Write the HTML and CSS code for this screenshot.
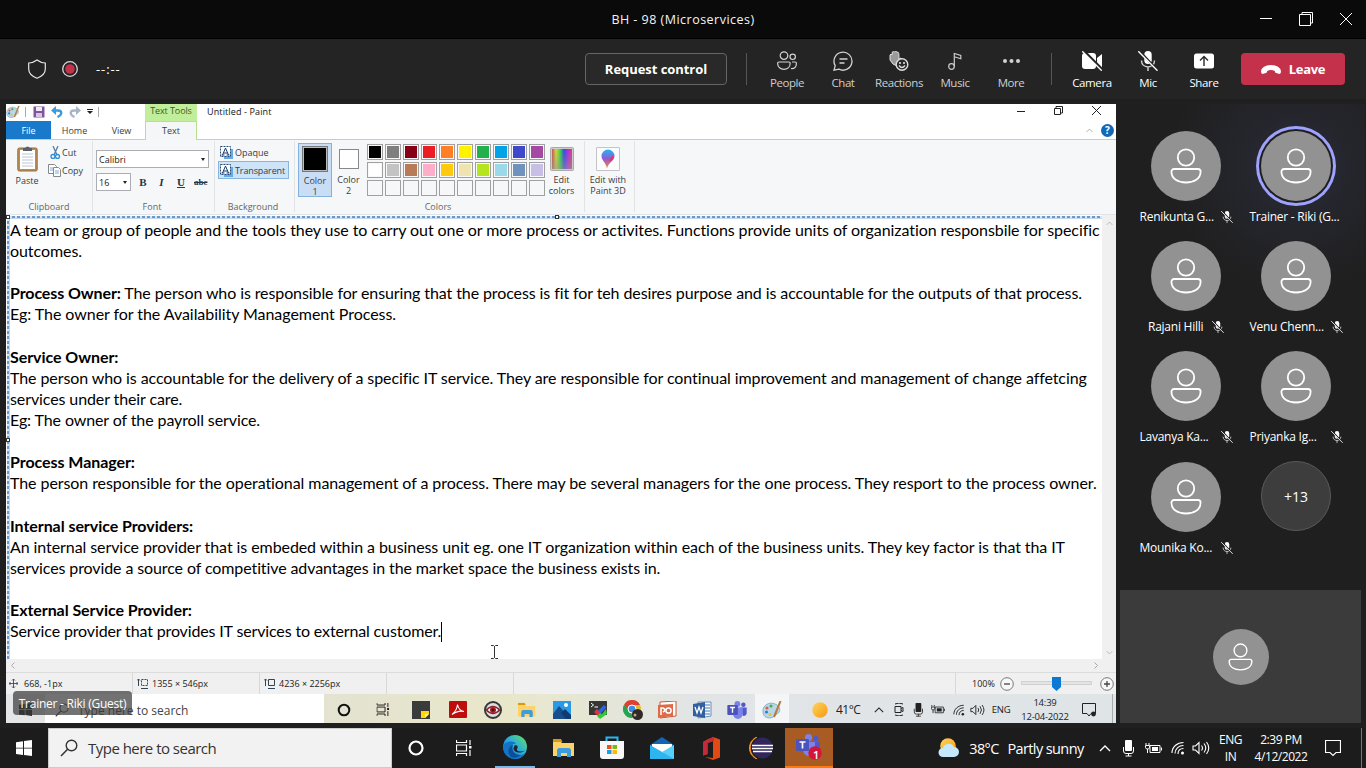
FILE: index.html
```html
<!DOCTYPE html>
<html lang="en">
<head>
<meta charset="utf-8">
<title>BH - 98 (Microservices)</title>
<link rel="stylesheet" href="styles.css">
</head>
<body>
<svg class="defs" width="0" height="0">
  <defs>
    <symbol id="person" viewBox="0 0 32 36"><g fill="none" stroke="#fff" stroke-width="1.8"><circle cx="16" cy="9.5" r="8.2"/><path d="M4 21h24a2.6 2.6 0 0 1 2.6 2.6C30.600 31 24 34.500 16 34.500S1.400 31 1.400 23.600A2.600 2.600 0 0 1 4 21z"/></g></symbol>
    <symbol id="micoff" viewBox="0 0 20 20"><rect x="6.300" y="0" width="7.400" height="13" rx="3.700" fill="#fff"/><path d="M3.500 9.500c0 8.500 13 8.500 13 0M10 16v4" fill="none" stroke="#ccc" stroke-width="1.500"/><path d="M1.300 0l18.500 19.500" stroke="#242424" stroke-width="2.500"/><path d="M.3 .3l19.200 19.400" stroke="#fff" stroke-width="1.400"/></symbol>
    <symbol id="mic" viewBox="0 0 12 17"><rect x="3" y="0" width="7" height="11" rx="1" fill="currentColor"/><path d="M1.500 7v4q0 2.500 2.500 2.500h5q2.500 0 2.500-2.500V7M6.500 13.500V16M3.500 16h6" fill="none" stroke="currentColor"/></symbol>
    <symbol id="battery" viewBox="0 0 17 13"><path d="M5 3.500h10v7H5zM16.500 5.500v3M1 1v2M4 1v2M.5 3.500h4v2l-1 1.500h-2l-1-1.500zM2.500 7v4" fill="none" stroke="currentColor"/><path d="M7 5h6v4H7z" fill="currentColor"/></symbol>
    <symbol id="wifi" viewBox="0 0 14 14"><g fill="none" stroke="currentColor" stroke-width="1.100"><path d="M1 12C1 6 6 1.500 12.500 1.500M4 12.500C4 8 7.500 4.500 12.500 4.500M7 13c0-3.300 2.200-5.500 5.500-5.500"/></g><circle cx="11.500" cy="12" r="1.500" fill="currentColor"/></symbol>
    <symbol id="volume" viewBox="0 0 18 14"><g fill="none" stroke="currentColor" stroke-width="1.100"><path d="M1 5h2.500L7 1.500v11L3.500 9H1zM9.500 4.500q2 2.500 0 5M12 2.500q3.500 4.500 0 9M14.500 1q4.500 6 0 12"/></g></symbol>
    <symbol id="caret" viewBox="0 0 12 7"><path d="M1 6l5-5 5 5" fill="none" stroke="currentColor" stroke-width="1.300"/></symbol>
    <symbol id="win" viewBox="0 0 16 16"><path d="M0 2.200l7-1v6.500H0zM8 1l8-1v7.700H8zM0 8.500h7V15l-7-1zM8 8.500h8V16l-8-1.100z" fill="currentColor"/></symbol>
    <symbol id="lens" viewBox="0 0 18 18"><circle cx="11.500" cy="6.500" r="5.300" fill="none" stroke="currentColor" stroke-width="1.400"/><path d="M7.600 10.300L1 17" stroke="currentColor" stroke-width="1.500"/></symbol>
    <symbol id="taskview" viewBox="0 0 16 16"><path d="M.5 0v2.500h10V0M.5 16v-2.500h10V16M.5 5h10v6H.5zM14 0v5M14 10v6" fill="none" stroke="currentColor" stroke-width="1.200"/><path d="M13 6h2.500v2.500H13z" fill="currentColor"/></symbol>
    <symbol id="folder" viewBox="0 0 22 18"><path d="M0 2h7l2 2h12v13H0z" fill="#fdd368"/><path d="M0 0h8l1.500 3H0z" fill="#d99a12"/><path d="M4 18v-6.500Q4 9 6.500 9h9q2.500 0 2.500 2.500V18h-4v-4H8v4z" fill="#3d9be0"/></symbol>
    <symbol id="teams" viewBox="0 0 24 22"><circle cx="19.800" cy="4.500" r="2.700" fill="#5059c9"/><circle cx="12.500" cy="3.600" r="3.600" fill="#7b83eb"/><path d="M16 8h8v7q-1 4-5 3z" fill="#5059c9"/><path d="M8 8h11v8q-1 6-6 6t-6-6z" fill="#7b83eb"/><rect y="5" width="13" height="12" rx="1" fill="#4b53bc"/><path d="M3.500 8h6M6.500 8v6.500" stroke="#fff" stroke-width="1.700"/></symbol>
    <symbol id="palette" viewBox="0 0 20 18"><path d="M1 11C0 5 7 0 13 3c6 2 6 8 2 10-3 1-3 4-7 4S1 15 1 11z" fill="#b8d8ea" stroke="#6c9db8" stroke-width=".7"/><circle cx="5" cy="7" r="1.600" fill="#e55c45"/><circle cx="9" cy="5" r="1.600" fill="#51a94c"/><circle cx="4.500" cy="11" r="1.600" fill="#397bd0"/><circle cx="8" cy="13.500" r="1.500" fill="#e9c233"/><path d="M18.500 0L12 16" stroke="#ba7b3b" stroke-width="2"/></symbol>
    <symbol id="atext" viewBox="0 0 13 13"><path d="M4 9h9v4H4zM10 3h3v7h-3z" fill="#66abe9"/><path d="M.5.500h10v10H.5z" fill="#fff" stroke="#244b78" stroke-dasharray="2 1"/><path d="M2.500 9l3-7 3 7M3.500 7h4M1.500 9h3M6.500 9h3" fill="none" stroke="#173b68"/></symbol>
    <linearGradient id="g-edge" x1="0" y1="1" x2="1" y2="0"><stop stop-color="#0b57a8"/><stop offset=".5" stop-color="#27a9e5"/><stop offset="1" stop-color="#68e35a"/></linearGradient>
    <linearGradient id="g-hue"><stop stop-color="#c5564c"/><stop offset=".2" stop-color="#dfd33c"/><stop offset=".4" stop-color="#3ddc42"/><stop offset=".6" stop-color="#2b50e4"/><stop offset=".8" stop-color="#b32ae0"/><stop offset="1" stop-color="#d84770"/></linearGradient>
    <linearGradient id="g-shade" x2="0" y2="1"><stop stop-color="#888" stop-opacity="0"/><stop offset="1" stop-color="#999" stop-opacity=".55"/></linearGradient>
    <linearGradient id="g-pin" x2="0" y2="1"><stop stop-color="#22b6f4"/><stop offset=".5" stop-color="#9558d1"/><stop offset="1" stop-color="#ff8a27"/></linearGradient>
    <linearGradient id="g-sun" x2="1" y2="1"><stop stop-color="#ffd45a"/><stop offset="1" stop-color="#f69a12"/></linearGradient>
  </defs>
</svg>

<header class="titlebar">
  <span class="title">BH - 98 (Microservices)</span>
  <div class="winbtns">
    <svg width="12" height="12"><path d="M0 5.500h12" stroke="#fff"/></svg>
    <svg width="14" height="14"><path d="M.5 2.500h11v11H.5zM3 2V.5h10.500V11H12" fill="none" stroke="#fff"/></svg>
    <svg width="12" height="12"><path d="M0 0l12 12M12 0L0 12" stroke="#fff"/></svg>
  </div>
</header>

<div class="toolbar">
  <svg class="shield" width="20" height="20" viewBox="0 0 20 20"><path d="M10 1q3.500 2.700 8.300 3v6q0 6-8.300 9.300Q1.700 16 1.700 10V4Q6.500 3.700 10 1z" fill="none" stroke="#e6e6e6" stroke-width="1.200"/></svg>
  <svg class="rec" width="16" height="16"><circle cx="8" cy="8" r="7.300" fill="none" stroke="#d8d8d8" stroke-width="1.300"/><circle cx="8" cy="8" r="4.800" fill="#c4314b"/></svg>
  <span class="timer">--:--</span>
  <button class="request">Request control</button>
  <i class="vline v1"></i>
  <div class="tool"><svg width="20" height="20"><g fill="none" stroke="#d2d2d2" stroke-width="1.200"><circle cx="7" cy="4.600" r="3.800"/><circle cx="15.700" cy="5.800" r="2.700"/><path d="M1.900 11h10q1.300 0 1.300 1.300c0 8-12.600 8-12.600 0Q.6 11 1.900 11zM15 11h3q1.400 0 1.400 1.300c0 4-2 5.500-5.400 5.200"/></g></svg><span>People</span></div>
  <div class="tool"><svg width="20" height="20"><path d="M1 19.200l1.200-4.500a9 9 0 1 1 3.700 3.500zM6.500 8h8M6.500 12h5" fill="none" stroke="#d2d2d2" stroke-width="1.300"/></svg><span>Chat</span></div>
  <div class="tool"><svg width="20" height="20"><path d="M1 4q1-2 2 0l.3-3Q5-.5 5.500 1 7-.5 8 1.200q1.500-.5 1.800 1.300L10 8l2-1q1 1-.5 3L8 15Q3.500 14 1 9z" fill="#999" stroke="#ddd"/><circle cx="13" cy="13.500" r="5.800" fill="#292929" stroke="#ddd" stroke-width="1.400"/><circle cx="11" cy="12" r=".9" fill="#fff"/><circle cx="15" cy="12" r=".9" fill="#fff"/><path d="M10 14.500q3 4 6 0" fill="none" stroke="#ddd" stroke-width="1.300"/></svg><span>Reactions</span></div>
  <div class="tool"><svg width="20" height="20"><circle cx="6.500" cy="15.500" r="2.800" fill="none" stroke="#ccc" stroke-width="1.200"/><path d="M9.300 15.500V2.500l6.500 2v3.300l-6.500-2" fill="none" stroke="#ccc" stroke-width="1.200"/></svg><span>Music</span></div>
  <div class="tool"><svg width="20" height="20"><g fill="#d2d2d2"><circle cx="4" cy="10" r="2"/><circle cx="10.500" cy="10" r="2"/><circle cx="17" cy="10" r="2"/></g></svg><span>More</span></div>
  <i class="vline v2"></i>
  <div class="tool on"><svg width="20" height="20"><rect x="0" y="2" width="14" height="16" rx="3" fill="#fff"/><path d="M15 7l5-4v14l-5-4z" fill="#fff"/><path d="M2 0l18 18" stroke="#242424" stroke-width="2.500"/><path d="M.3.300l19.400 19.400" stroke="#fff" stroke-width="1.300"/></svg><span>Camera</span></div>
  <div class="tool on"><svg width="20" height="20"><use href="#micoff"/></svg><span>Mic</span></div>
  <div class="tool on"><svg width="20" height="20"><rect y="2.500" width="20" height="15" rx="2.500" fill="#fff"/><path d="M10 15V5.500M6 9.500l4-4 4 4" fill="none" stroke="#292929" stroke-width="1.400"/></svg><span>Share</span></div>
  <button class="leave"><svg width="20" height="9"><path d="M0 6.500Q1 0 10 0t10 6.500q0 3-2.300 2.300l-2.600-.7q-1.200-.3-1.300-2.100Q10 4 6.200 6q-.1 1.800-1.300 2.100l-2.600.7Q0 9.500 0 6.500z" fill="#fff"/></svg>Leave</button>
</div>

<div class="stage">
<main class="share">
  <div class="p-title">
    <div class="quick">
      <svg width="14" height="14" viewBox="0 0 20 18"><use href="#palette"/></svg>
      <i></i>
      <svg width="12" height="12"><path d="M.5.500h11v11H.5z" fill="#81549b"/><path d="M3 1h6v4H3z" fill="#eee9f3"/><path d="M3 7h6v4H3z" fill="#d6c7e2"/></svg>
      <svg width="12" height="12"><path d="M3 4.500h4q4 0 3 3.500-.5 2-3.500 3" fill="none" stroke="#3b9bdd" stroke-width="2.400"/><path d="M0 4.500L5 0v9z" fill="#3b9bdd"/></svg>
      <svg width="12" height="12"><path d="M9 4.500H5Q1 4.500 2 8q.5 2 3.500 3" fill="none" stroke="#a8b5c3" stroke-width="2.400"/><path d="M12 4.500L7 0v9z" fill="#a8b5c3"/></svg>
      <svg width="6" height="6"><path d="M0 .5h6" stroke="#222"/><path d="M0 2h6L3 5z" fill="#222"/></svg>
      <i></i>
    </div>
    <span class="ttools">Text Tools</span>
    <span class="ptitle">Untitled - Paint</span>
    <div class="pbtns">
      <svg width="8" height="10"><path d="M0 5.500h8" stroke="#222"/></svg>
      <svg width="9" height="9"><path d="M.5 2.500h6v6h-6zM2 2V.5h6.500V7H7" fill="none" stroke="#222"/></svg>
      <svg width="9" height="9"><path d="M0 0l9 9M9 0L0 9" stroke="#222"/></svg>
    </div>
  </div>
  <nav class="tabs">
    <span class="file">File</span><span class="tab">Home</span><span class="tab view">View</span><span class="tab active">Text</span>
    <svg class="collapse" width="7" height="5" viewBox="0 0 12 7"><use href="#caret"/></svg><b class="help">?</b>
  </nav>
  <section class="ribbon">
    <div class="group g-clip">
      <div class="gbody">
        <div class="paste"><svg width="21" height="26"><rect x=".8" y="2" width="19.400" height="23" rx="1.500" fill="#b98d55" stroke="#94703f"/><path d="M3 4h15v19H3z" fill="#fff"/><path d="M5 8h11M5 11h11M5 14h11M5 17h11M5 20h11" stroke="#bcc6d2"/><path d="M6 2h2q2.500-3 5 0h2v3H6z" fill="#59616e"/></svg><span>Paste</span></div>
        <div class="cc">
          <div><svg width="14" height="13"><path d="M5 0l4 9M10 0L6 9" stroke="#5a7d9f" stroke-width="1.300"/><circle cx="5" cy="10.500" r="2" fill="none" stroke="#2d8dd4" stroke-width="1.300"/><circle cx="9.500" cy="10.500" r="2" fill="none" stroke="#2d8dd4" stroke-width="1.300"/></svg>Cut</div>
          <div><svg width="14" height="13"><path d="M.5.500h6l2 2v7h-8z" fill="#fff" stroke="#888"/><path d="M5.500 3.500h5l2 2v7h-7z" fill="#fff" stroke="#888"/><path d="M2 4h3M2 6h3M7 7h4M7 9h4" stroke="#7caadc"/></svg>Copy</div>
        </div>
      </div>
      <span class="glabel">Clipboard</span>
    </div>
    <div class="group g-font">
      <div class="gbody">
        <div class="sel">Calibri<i class="dd"></i></div>
        <div class="frow"><div class="sel size">16<i class="dd"></i></div><b>B</b><em>I</em><u>U</u><s>abc</s></div>
      </div>
      <span class="glabel">Font</span>
    </div>
    <div class="group g-back">
      <div class="gbody">
        <div class="opt"><svg width="13" height="13"><use href="#atext"/></svg>Opaque</div>
        <div class="opt sel-on"><svg width="13" height="13"><use href="#atext"/></svg>Transparent</div>
      </div>
      <span class="glabel">Background</span>
    </div>
    <div class="group g-col">
      <div class="gbody">
        <div class="cbtn c1"><i class="sw"></i><span>Color<br>1</span></div>
        <div class="cbtn c2"><i class="sw"></i><span>Color<br>2</span></div>
        <div class="pal">
          <i class="k0"></i><i class="k1"></i><i class="k2"></i><i class="k3"></i><i class="k4"></i><i class="k5"></i><i class="k6"></i><i class="k7"></i><i class="k8"></i><i class="k9"></i>
          <i class="m0"></i><i class="m1"></i><i class="m2"></i><i class="m3"></i><i class="m4"></i><i class="m5"></i><i class="m6"></i><i class="m7"></i><i class="m8"></i><i class="m9"></i>
          <i></i><i></i><i></i><i></i><i></i><i></i><i></i><i></i><i></i><i></i>
        </div>
        <div class="cbtn ec"><svg width="24" height="24"><rect x=".5" y=".5" width="23" height="23" rx="1" fill="#ccc" stroke="#aaa"/><path d="M2 2h20v20H2z" fill="url(#g-hue)"/><path d="M2 2h20v20H2z" fill="url(#g-shade)"/></svg><span>Edit<br>colors</span></div>
      </div>
      <span class="glabel">Colors</span>
    </div>
    <div class="group g-3d">
      <div class="gbody"><div class="cbtn"><svg width="24" height="24"><path d="M.5.500h23v23H.5z" fill="#fbfcfe" stroke="#c4c4c8"/><path d="M12 2.500a6.500 6.500 0 0 1 6.500 6.500c0 5-6 6-7.500 12.500-1-6-5.500-8-5.500-12.500A6.500 6.500 0 0 1 12 2.500z" fill="url(#g-pin)"/><path d="M13 14l4-6q1 4-2 6z" fill="#e2365c"/></svg><span>Edit with<br>Paint 3D</span></div></div>
    </div>
  </section>

  <div class="work">
    <div class="paper">
      <div class="ln l1">A team or group of people and the tools they use to carry out one or more process or activites. Functions provide units of organization responsbile for specific</div>
      <div class="ln">outcomes.</div>
      <div class="ln"></div>
      <div class="ln l4"><b>Process Owner:</b> The person who is responsible for ensuring that the process is fit for teh desires purpose and is accountable for the outputs of that process.</div>
      <div class="ln l5">Eg: The owner for the Availability Management Process.</div>
      <div class="ln"></div>
      <div class="ln"><b>Service Owner:</b></div>
      <div class="ln l8">The person who is accountable for the delivery of a specific IT service. They are responsible for continual improvement and management of change affetcing</div>
      <div class="ln l9">services under their care.</div>
      <div class="ln l9">Eg: The owner of the payroll service.</div>
      <div class="ln"></div>
      <div class="ln"><b>Process Manager:</b></div>
      <div class="ln l13">The person responsible for the operational management of a process. There may be several managers for the one process. They resport to the process owner.</div>
      <div class="ln"></div>
      <div class="ln"><b>Internal service Providers:</b></div>
      <div class="ln l16">An internal service provider that is embeded within a business unit eg. one IT organization within each of the business units. They key factor is that tha IT</div>
      <div class="ln l17">services provide a source of competitive advantages in the market space the business exists in.</div>
      <div class="ln"></div>
      <div class="ln"><b>External Service Provider:</b></div>
      <div class="ln l20">Service provider that provides IT services to external customer.<i class="textcaret"></i></div>
      <i class="dash top"></i><i class="dash left"></i>
      <i class="handle h1"></i><i class="handle h2"></i><i class="handle h3"></i>
      <svg class="ibeam" width="7" height="14"><path d="M0 .5h2.500l1 1 1-1H7M3.500 1v12M0 13.500h2.500l1-1 1 1H7" fill="none" stroke="#333"/></svg>
    </div>
    <div class="vscroll"><svg width="7" height="5" viewBox="0 0 12 7"><use href="#caret"/></svg><svg class="down" width="7" height="5" viewBox="0 0 12 7"><use href="#caret"/></svg></div>
  </div>
  <div class="hscroll"><svg width="5" height="7"><path d="M4.500.500l-3 3 3 3" fill="none" stroke="#aaa"/></svg><svg width="5" height="7"><path d="M.5.500l3 3-3 3" fill="none" stroke="#aaa"/></svg></div>
  <div class="status">
    <div class="pos"><svg width="9" height="9"><path d="M4.500 0v9M0 4.500h9M3 1.500L4.500 0 6 1.500M3 7.500L4.500 9 6 7.500M1.500 3L0 4.500 1.500 6M7.500 3L9 4.500 7.500 6" fill="none" stroke="#3c4a5c" stroke-width=".9"/></svg>668, -1px</div>
    <div><svg width="12" height="10"><path d="M1.500 0v7M0 1.500L1.500 0 3 1.500M4 9.500h7" stroke="#345" fill="none"/><path d="M4.500.500h6v6h-6z" fill="none" stroke="#345" stroke-dasharray="2 1"/></svg>1355 × 546px</div>
    <div><svg width="12" height="10"><path d="M1.500 0v7M0 1.500L1.500 0 3 1.500M4 9.500h7M4.500.500h6v6h-6z" stroke="#345" fill="none"/></svg>4236 × 2256px</div>
    <div></div><div></div>
    <div class="zoombar">100%<svg class="minus" width="14" height="14"><circle cx="7" cy="7" r="6.300" fill="#f8f8f8" stroke="#777"/><path d="M4 7h6" stroke="#444" stroke-width="1.300"/></svg><svg width="71" height="16"><path d="M.5 5.500h70v3H.5z" fill="#e4e4e4" stroke="#d0d0d0"/><path d="M31 1h9v10l-4.500 4L31 11z" fill="#0b78d4"/></svg><svg class="plus" width="14" height="14"><circle cx="7" cy="7" r="6.300" fill="#f8f8f8" stroke="#777"/><path d="M4 7h6M7 4v6" stroke="#444" stroke-width="1.300"/></svg></div>
  </div>
  <div class="itask">
    <span><svg width="13" height="13" viewBox="0 0 16 16"><use href="#win"/></svg></span>
    <div class="isearch"><svg width="14" height="14" viewBox="0 0 18 18"><use href="#lens"/></svg>Type here to search</div>
    <span><svg width="14" height="14"><circle cx="7" cy="7" r="5.300" fill="none" stroke="#111" stroke-width="2"/></svg></span>
    <span><svg width="14" height="13" viewBox="0 0 16 16"><use href="#taskview"/></svg></span>
    <span><svg width="18" height="18"><path d="M0 0h18v18H0z" fill="#3b3b3b"/><path d="M9 10h8v3l-4 4H9z" fill="#ffd900"/><path d="M13 17v-4h4z" fill="#fff2a0"/></svg></span>
    <span><svg width="18" height="17"><rect width="18" height="17" rx="1" fill="#bd0d0d"/><path d="M3 13.500Q8 9.500 8.500 3.500q1 6 6.500 7-5-1.500-12 3z" fill="none" stroke="#fff" stroke-width="1.100"/></svg></span>
    <span><svg width="18" height="18"><circle cx="9" cy="9" r="8" fill="#ddd" stroke="#34383b" stroke-width="2"/><path d="M2.500 9q6.500-7 13 0-6.500 7-13 0z" fill="#fff" stroke="#8c2529" stroke-width="1.500"/><circle cx="9" cy="9" r="3" fill="#a31b24"/><circle cx="9" cy="9" r="1.200" fill="#222"/></svg></span>
    <span><svg width="18" height="16" viewBox="0 0 22 18"><use href="#folder"/></svg></span>
    <span><svg width="18" height="18"><path d="M0 0h18v18H0z" fill="#2b9ae6"/><path d="M0 13l6-8 12 13H0z" fill="#174e8b"/><path d="M8 12l4-4 6 6v4h-5z" fill="#103b70"/><circle cx="13" cy="4" r="2" fill="#fff"/></svg></span>
    <span><svg width="18" height="18"><path d="M0 0h18v14H0z" fill="#363636"/><path d="M2 2l2.500 2L2 6M5.500 6H9" fill="none" stroke="#fff"/><path d="M5 11l3-3 4 4-3 3z" fill="#ed2f36"/><path d="M9 10l6-6 2.500 2.500-6 6z" fill="#2864ee"/><path d="M8 15l3-3 2 1 4-5 1 5-7 5z" fill="#32ca35"/></svg></span>
    <span><svg width="20" height="20"><circle cx="9" cy="9" r="9" fill="#ddbd30"/><path d="M1.200 4.500A9 9 0 0 1 17 5H9a4.200 4.200 0 0 0-3.500 6.500z" fill="#dd4035"/><path d="M1.200 4.500A9 9 0 0 0 9 18l3.300-6A4 4 0 0 1 5.500 11z" fill="#28a352"/><circle cx="9" cy="9" r="4" fill="#3d8de4" stroke="#fff"/><circle cx="14.500" cy="14.500" r="5.500" fill="#302a26"/><circle cx="12" cy="15" r="1.500" fill="#bca58e"/></svg></span>
    <span><svg width="19" height="18"><path d="M2 1l16-1v15L2 17z" fill="#fff" stroke="#d05431"/><path d="M0 4l15-1v12L0 17z" fill="#de6b45"/><circle cx="10.500" cy="9.500" r="2.600" fill="none" stroke="#fff" stroke-width="1.500"/><path d="M3 14V7h2q4 2 0 4" fill="none" stroke="#fff" stroke-width="1.500"/></svg></span>
    <span><svg width="19" height="18"><path d="M5 1h13v14L5 17z" fill="#f5f8fb" stroke="#6d8fb8"/><path d="M12 4h5M12 7h5M12 10h5M12 13h5" stroke="#4b78b3"/><path d="M0 3l12-2v16L0 15z" fill="#315f9f"/><path d="M2 6l2 6 2-6 2 6 2-6" fill="none" stroke="#fff" stroke-width="1.300"/></svg></span>
    <span><svg width="20" height="18" viewBox="0 0 24 22"><use href="#teams"/></svg></span>
    <span class="cur"><svg width="20" height="18"><use href="#palette"/></svg></span>
    <span class="sun"><svg width="16" height="16"><circle cx="8" cy="8" r="7.700" fill="url(#g-sun)"/></svg></span>
    <span class="deg">41°C</span>
    <span><svg width="10" height="6" viewBox="0 0 12 7"><use href="#caret"/></svg></span>
    <span><svg width="10" height="13"><path d="M1 1q4-2 8 0M1 12q4 2 8 0M1 3.500h6v6H1zM7 5.500l2-1v4l-2-1" fill="none" stroke="#222"/></svg></span>
    <span><svg width="10" height="14" viewBox="0 0 12 17"><use href="#mic"/></svg></span>
    <span><svg width="14" height="11" viewBox="0 0 17 13"><use href="#battery"/></svg></span>
    <span><svg width="12" height="12" viewBox="0 0 14 14"><use href="#wifi"/></svg></span>
    <span><svg width="15" height="12" viewBox="0 0 18 14"><use href="#volume"/></svg></span>
    <span class="tx">ENG</span>
    <span class="tx clock">14:39<br>12-04-2022</span>
    <span class="noti"><svg width="14" height="14"><path d="M.5.500h13v10H9l-2 2.500-2-2.500H.5z" fill="none" stroke="#222"/><circle cx="11.500" cy="11" r="2.400" fill="#222"/></svg></span>
    <span class="edge"></span>
  </div>
  <span class="presenter">Trainer - Riki (Guest)</span>
</main>

<aside class="side">
  <div class="people">
    <div class="p"><i class="av"><svg width="32" height="36"><use href="#person"/></svg></i><span>Renikunta G...<svg width="12" height="12"><use href="#micoff"/></svg></span></div>
    <div class="p talk"><i class="av"><svg width="32" height="36"><use href="#person"/></svg></i><span>Trainer - Riki (G...</span></div>
    <div class="p short"><i class="av"><svg width="32" height="36"><use href="#person"/></svg></i><span>Rajani Hilli<svg width="12" height="12"><use href="#micoff"/></svg></span></div>
    <div class="p"><i class="av"><svg width="32" height="36"><use href="#person"/></svg></i><span>Venu Chenn...<svg width="12" height="12"><use href="#micoff"/></svg></span></div>
    <div class="p"><i class="av"><svg width="32" height="36"><use href="#person"/></svg></i><span>Lavanya Ka...<svg width="12" height="12"><use href="#micoff"/></svg></span></div>
    <div class="p"><i class="av"><svg width="32" height="36"><use href="#person"/></svg></i><span>Priyanka Ig...<svg width="12" height="12"><use href="#micoff"/></svg></span></div>
    <div class="p last"><i class="av"><svg width="32" height="36"><use href="#person"/></svg></i><span>Mounika Ko...<svg width="12" height="12"><use href="#micoff"/></svg></span></div>
    <div class="p"><i class="av more">+13</i></div>
  </div>
  <div class="self"><i class="av small"><svg width="25" height="28" viewBox="0 0 32 36"><use href="#person"/></svg></i></div>
</aside>
</div>

<footer class="task">
  <span class="start"><svg width="16" height="16"><use href="#win"/></svg></span>
  <div class="search"><svg width="18" height="18"><use href="#lens"/></svg>Type here to search</div>
  <span><svg width="16" height="16"><circle cx="8" cy="8" r="6.500" fill="none" stroke="#fff" stroke-width="2.200"/></svg></span>
  <span><svg width="16" height="16"><use href="#taskview"/></svg></span>
  <span class="under"><svg width="24" height="24" viewBox="0 0 24 24"><circle cx="12" cy="12" r="12" fill="url(#g-edge)"/><path d="M0 12C1 6 11 5 13 9c-4-1-6 3-4 7 2 5 8 6 13 2q-4 6-10 6Q1 23 0 12z" fill="#1474c4"/><path d="M8 22C4 18 5 11 10 10c-2 5 1 10 8 10q-5 4-10 2z" fill="#0a4e98"/><path d="M11.500 10.500c3-1 4 1.500 2.500 3.500-1 2 3 3.500 8 1.500-3 3-11 3-11.500-2z" fill="#1c2733"/></svg></span>
  <span><svg width="22" height="18"><use href="#folder"/></svg></span>
  <span><svg width="24" height="24"><path d="M6.500 6V1.500h11V6" fill="none" stroke="#28b7f3" stroke-width="2"/><path d="M0 5h24v15q0 3-3 3H3q-3 0-3-3z" fill="#f8f8f8"/><path d="M7 9h4.500v4H7z" fill="#f05020"/><path d="M12.500 9H17v4h-4.500z" fill="#7aba17"/><path d="M7 14h4.500v4H7z" fill="#16a2e7"/><path d="M12.500 14H17v4h-4.500z" fill="#fdb813"/></svg></span>
  <span><svg width="24" height="22"><path d="M0 8l12-8 12 8v14H0z" fill="#1264b4"/><path d="M2 7h20v6l-10 5L2 13z" fill="#fff"/><path d="M0 8l14 8 10-8v14H0z" fill="#2eb4ef"/><path d="M24 8v14L12 15z" fill="#57cff6"/></svg></span>
  <span><svg width="19" height="23"><path d="M11 0l7 2.500v18L11 23l-8-3 8 1V4L5.500 6v11L1 18.500V5z" fill="#e14a14"/><path d="M1 5l5-3 6-2v4L5.500 6v11L1 18.500z" fill="#c62a39"/></svg></span>
  <span><svg width="24" height="22"><path d="M8 0C-2 4-2 18 8 22-1 17-1 5 8 0z" fill="#f7941e" stroke="#f7941e"/><circle cx="13.500" cy="11" r="10.500" fill="#32265c"/><path d="M3 8.500h21M3 11.500h21M4 14.500h19" stroke="#fff" stroke-width="1.600"/></svg></span>
  <span class="teamsapp"><svg width="26" height="26" viewBox="0 0 26 26"><svg width="24" height="22"><use href="#teams"/></svg><circle cx="19" cy="19" r="6.700" fill="#d3153b"/></svg><b>1</b></span>
  <span></span>
  <span><svg width="21" height="20"><circle cx="10" cy="8" r="7.800" fill="url(#g-sun)"/><path d="M5 19a4.500 4.500 0 0 1 0-9 6 6 0 0 1 11-1 5 5 0 0 1 0 10z" fill="#c5e8fc"/></svg></span>
  <span class="w">38°C</span>
  <span class="w">Partly sunny</span>
  <span><svg width="12" height="7"><use href="#caret"/></svg></span>
  <span><svg width="12" height="17"><use href="#mic"/></svg></span>
  <span><svg width="17" height="13"><use href="#battery"/></svg></span>
  <span><svg width="14" height="14"><use href="#wifi"/></svg></span>
  <span><svg width="18" height="14"><use href="#volume"/></svg></span>
  <span class="tt">ENG<br>IN</span>
  <span class="tt">2:39 PM<br>4/12/2022</span>
  <span class="noti2"><svg width="16" height="17"><path d="M.5.500h15v12H11l-3 3-3-3H.5z" fill="none" stroke="#fff" stroke-width="1.200"/></svg></span>
  <span class="edge2"></span>
</footer>
</body>
</html>
```
FILE: styles.css
```css
* { box-sizing: border-box; }
html, body { margin: 0; width: 1366px; height: 768px; overflow: hidden; }
body { background: #1f1f1f; color: #fff; font-family: "Open Sans", "Noto Sans", sans-serif; font-size: 12px; display: flex; flex-direction: column; }
svg { display: block; flex: none; }
.defs { position: absolute; }
i { font-style: normal; }
button { font-family: inherit; padding: 0; margin: 0; color: #fff; }

.titlebar { height: 39px; flex: none; background: #0a0a0a; border-bottom: 1px solid #000; position: relative; display: flex; align-items: center; justify-content: center; }
.title { font-size: 12.500px; letter-spacing: .48px; color: #f4f4f4; }
.winbtns { position: absolute; right: 14px; top: 12px; display: flex; align-items: center; gap: 27px; }

.toolbar { height: 60px; flex: none; background: #242424; display: flex; align-items: center; padding: 0 21px 0 27px; }
.rec { margin-left: 15px; }
.timer { margin-left: 18px; width: 26px; font-size: 13px; letter-spacing: .9px; }
.request { margin-left: 463px; width: 142px; height: 32px; border: 1px solid #666; border-radius: 4px; background: #292929; font-size: 13px; font-weight: 700; letter-spacing: -.05px; flex: none; }
.vline { width: 1px; height: 32px; background: #555; }
.v1 { margin: 0 12px 0 19px; }
.v2 { margin: 0 12px; }
.tool { width: 56px; flex: none; display: flex; flex-direction: column; align-items: center; gap: 4px; padding-top: 4px; color: #cfcfcf; font-size: 11.500px; line-height: 16px; letter-spacing: -.45px; }
.tool.on { color: #fff; letter-spacing: -.35px; }
.leave { margin-left: auto; width: 104px; height: 32px; border: 0; border-radius: 4px; background: #c4314b; font-size: 13px; font-weight: 700; letter-spacing: -.3px; display: flex; align-items: center; justify-content: center; gap: 8px; }

.stage { height: 629px; flex: none; display: flex; padding: 5px 0 5px 6px; }
.share { width: 1110px; height: 619px; background: #fff; color: #3c3c3c; position: relative; display: flex; flex-direction: column; font-size: 9px; }

.p-title { height: 17px; display: flex; align-items: stretch; }
.quick { width: 139px; display: flex; align-items: center; gap: 6px; padding: 0 0 2px; }
.quick i { width: 1px; height: 10px; background: #aaa; margin: 0 1px 0 -1px; }
.ttools { width: 52px; background: #c0ee9a; color: #3c5c2c; line-height: 13px; text-align: center; letter-spacing: -.1px; }
.ptitle { margin-left: 10px; line-height: 16px; color: #111; letter-spacing: .12px; }
.pbtns { margin-left: auto; display: flex; align-items: center; gap: 29px; padding: 0 15px 4px 0; }
.tabs { height: 19px; border-bottom: 1px solid #b6e08e; display: flex; line-height: 19px; text-align: center; }
.file { width: 45px; background: #1979ca; color: #fff; }
.tab { width: 47px; }
.tab.view { width: 47px; }
.tab.active { width: 52px; height: 19px; background: #f5f6f7; border: 1px solid #b6e08e; border-bottom: 0; line-height: 17px; }
.collapse { margin: 7px 8px 0 auto; color: #999; }
.help { width: 13px; height: 13px; margin: 3px 2px 0 0; border-radius: 50%; background: #1267b8; color: #fff; font-size: 10px; line-height: 13px; }

.ribbon { height: 75px; background: #f5f7f9; border-bottom: 1px solid #e0e3e8; display: flex; }
.group { display: flex; flex-direction: column; border-right: 1px solid #e2e3e5; margin: 1px 0 2px; }
.gbody { height: 58px; flex: none; display: flex; }
.glabel { text-align: center; line-height: 14px; padding-top: 1px; color: #666; }
.g-clip { width: 87px; }
.g-font { width: 122px; }
.g-font .gbody, .g-back .gbody { flex-direction: column; }
.g-back { width: 80px; }
.g-back .glabel, .g-font .glabel, .g-col .glabel { padding-right: 3px; }
.g-col { width: 290px; }
.g-3d { width: 50px; }
.paste { width: 42px; padding-top: 5px; display: flex; flex-direction: column; align-items: center; gap: 2px; line-height: 13px; }
.cc { padding-top: 3px; display: flex; flex-direction: column; gap: 1px; }
.cc div { display: flex; gap: 0; align-items: center; height: 17px; }
.sel { width: 113px; height: 18px; margin: 9px 0 0 3px; border: 1px solid #abadb3; background: #fff; display: flex; justify-content: space-between; align-items: center; padding: 0 3px 0 2px; color: #222; flex: none; }
.size { width: 35px; margin: 0 0 0 3px; }
.dd { border: 2.500px solid transparent; border-top: 3px solid #222; border-bottom: 0; }
.frow { display: flex; align-items: center; margin-top: 5px; color: #26364c; font-family: "Liberation Serif", serif; font-size: 11px; }
.frow .size { font-family: "Open Sans", sans-serif; font-size: 9px; }
.frow b { width: 24px; text-align: center; }
.frow em { width: 13px; text-align: center; font-weight: 700; }
.frow u { width: 26px; text-align: center; font-weight: 700; }
.frow s { font-size: 9px; font-weight: 700; }
.opt { height: 18px; margin: 2px 0 0 3px; width: 71px; border: 1px solid transparent; display: flex; align-items: center; gap: 2px; padding-left: 1px; flex: none; }
.opt + .opt { margin-top: 0; }
.sel-on { background: #cde3f8; border-color: #88b5df; letter-spacing: -.12px; }
.cbtn { display: flex; flex-direction: column; align-items: center; text-align: center; line-height: 10.500px; padding-top: 6px; }
.cbtn span { margin-top: 4px; white-space: nowrap; }
.c1 { width: 34px; height: 54px; margin: 2px 0 0 3px; background: #c9def5; border: 1px solid #84b2de; padding-top: 2px; }
.c1 .sw { width: 26px; height: 26px; border: 1px solid #777; outline: 1px solid #bbb; outline-offset: -2px; background: #000; flex: none; }
.c1 span { margin-top: 4px; }
.c2 { width: 35px; padding: 8px 2px 0 0; }
.c2 .sw { width: 20px; height: 20px; border: 1px solid #888; background: #fff; flex: none; }
.c2 span { margin-top: 6px; }
.pal { display: grid; grid-template-columns: repeat(10, 16px); grid-auto-rows: 16px; gap: 2px; height: 52px; margin-top: 3px; }
.pal i { border: 1px solid #a0a0a0; box-shadow: inset 0 0 0 1px #f8f8f8; }
.k0 { background: #000; } .k1 { background: #7f7f7f; } .k2 { background: #880015; } .k3 { background: #ed1c24; } .k4 { background: #ff7f27; }
.k5 { background: #fff200; } .k6 { background: #22b14c; } .k7 { background: #00a2e8; } .k8 { background: #3f48cc; } .k9 { background: #a349a4; }
.m0 { background: #fff; } .m1 { background: #c3c3c3; } .m2 { background: #b97a57; } .m3 { background: #ffaec9; } .m4 { background: #ffc90e; }
.m5 { background: #efe4b0; } .m6 { background: #b5e61d; } .m7 { background: #99d9ea; } .m8 { background: #7092be; } .m9 { background: #c8bfe7; }
.ec { width: 33px; }
.g-3d .cbtn { width: 46px; }

.work { height: 444px; display: flex; }
.paper { width: 1096px; padding: 4px 0 0 4px; position: relative; color: #000; font-family: Lato, "Open Sans", sans-serif; font-size: 16px; overflow: hidden; }
.ln { height: 21.120px; line-height: 21.120px; white-space: nowrap; letter-spacing: -.06px; }
.l1 { letter-spacing: -.075px; }
.l4 { letter-spacing: -.1px; }
.l5 { letter-spacing: -.05px; }
.l8 { letter-spacing: -.085px; }
.l9, .l17 { letter-spacing: -.105px; }
.l13 { letter-spacing: -.075px; }
.l16 { letter-spacing: -.08px; }
.l20 { letter-spacing: -.14px; }
.textcaret { display: inline-block; width: 1px; height: 20px; background: #000; vertical-align: -5px; }
.dash { position: absolute; }
.dash.top { left: 1px; top: 1px; width: 1095px; height: 3px; background: repeating-linear-gradient(90deg, #6b9bcd 0 3px, #d9e7f5 3px 5px); border-bottom: 1px solid #c3d5ea; }
.dash.left { left: 1px; top: 1px; width: 3px; height: 443px; background: repeating-linear-gradient(0deg, #6b9bcd 0 3px, #d9e7f5 3px 5px); border-right: 1px solid #c3d5ea; }
.handle { position: absolute; width: 4px; height: 4px; border: 1px solid #333; background: #fff; }
.h1 { left: 0; top: 0; } .h2 { left: 549px; top: 0; } .h3 { left: 0; top: 223px; }
.ibeam { position: absolute; left: 485px; top: 430px; }
.vscroll { width: 14px; background: #f0f0f0; color: #aaa; display: flex; flex-direction: column; justify-content: space-between; align-items: center; padding: 6px 0 4px; }
.down { transform: rotate(180deg); }
.hscroll { height: 13px; background: #f0f0f0; display: flex; justify-content: space-between; align-items: center; padding: 0 17px 0 4px; }
.status { height: 22px; border-top: 1px solid #dcdcdc; background: #f0f0f0; display: grid; grid-template-columns: 127px 127px 127px 127px 442px 160px; color: #222; }
.status > div { border-right: 1px solid #d8d8d8; display: flex; align-items: center; gap: 3px; padding-left: 4px; }
.status > .pos { padding-left: 3px; gap: 6px; }
.status .zoombar { border: 0; padding-left: 16px; gap: 0; }
.minus { margin: 0 7px 0 5px; }
.plus { margin-left: 8px; }

.itask { height: 29px; display: grid; align-items: center; color: #222; background: linear-gradient(90deg, #e4e6e8 0, #e4e3d0 32%, #e9e7ca 45%, #e2e5e6 62%, #dfe4e6 100%);
  grid-template-columns: 39px 279px 40px 38px 38px 35px 35px 34px 36px 36px 34px 35px 34px 36px 34px 47px 34px 18px 22px 16px 24px 18px 18px 30px 58px 30px 12px; grid-auto-rows: 29px; }
.itask > span, .task > span { display: flex; align-items: center; justify-content: center; height: 100%; }
.itask > span { padding-top: 2px; }
.itask > .cur { background: #f3f5f6; }
.isearch { height: 29px; background: #fff; display: flex; align-items: center; gap: 9px; padding: 3px 0 0 10px; font-size: 12px; letter-spacing: 0; color: #444; }
.itask > .sun { justify-content: flex-end; padding-right: 8px; }
.itask .deg { font-size: 12px; letter-spacing: -.5px; justify-content: flex-start; }
.itask .tx { font-size: 9.500px; letter-spacing: -.2px; line-height: 14px; text-align: center; }
.itask > .edge { border-left: 1px solid #aaa; margin-left: 8px; }
.presenter { position: absolute; left: 7px; top: 587px; width: 119px; height: 24px; border-radius: 4px; background: rgba(60,60,60,.72); color: #fff; font-size: 12px; letter-spacing: -.25px; line-height: 25px; text-align: center; white-space: nowrap; }

.side { width: 245px; margin-left: 4px; display: flex; flex-direction: column; justify-content: space-between; align-items: flex-start; height: 619px; background: radial-gradient(circle 130px at 176px 62px, #292a36, rgba(31,31,31,0)); }
.people { display: grid; grid-template-columns: 110px 110px; grid-auto-rows: 110px; padding: 27px 0 0 11px; }
.p { display: flex; flex-direction: column; align-items: center; }
.p.last { padding-top: 1px; }
.p span { width: 93px; display: flex; justify-content: space-between; align-items: center; margin-top: 8px; line-height: 16px; font-size: 12px; letter-spacing: -.25px; white-space: nowrap; }
.p.short span { width: 76px; }
.av { width: 70px; height: 70px; flex: none; border-radius: 50%; background: #929292; display: flex; align-items: center; justify-content: center; }
.talk .av { box-shadow: 0 0 0 2px #1f1f1f, 0 0 0 5px #9ea2ff; }
.av.more { background: #3d3d3d; border: 1px solid #5a5a5a; font-size: 14px; }
.self { width: 241px; height: 133px; background: #3b3b3b; display: flex; align-items: center; justify-content: center; }
.av.small { width: 56px; height: 56px; }

.task { height: 40px; flex: none; background: #1c1c1c; display: grid; grid-auto-rows: 40px; align-items: center;
  grid-template-columns: 48px 344px 48px 48px 54px 44px 52px 48px 50px 49px 48px 98px 34px 38px 85px 34px 12px 38px 12px 34px 25px 76px 28px 19px; }
.search { height: 40px; background: #f2f2f2; border: 1px solid #ccc; color: #333; font-size: 15px; letter-spacing: -.52px; display: flex; align-items: center; gap: 10px; padding-left: 11px; }
.task > .under { border-bottom: 2px solid #76b9ed; margin: 0 7px; }
.task > .teamsapp { background: #a85c24; border-bottom: 2px solid #ff7a0c; position: relative; }
.teamsapp b { position: absolute; left: 28px; top: 19px; font-size: 11px; line-height: 15px; font-weight: 600; }
.task .w { font-size: 14.500px; letter-spacing: -.6px; white-space: nowrap; }
.task .tt { font-size: 12px; letter-spacing: -.45px; line-height: 17px; text-align: center; white-space: nowrap; }
.task > .edge2 { border-left: 1px solid #777; margin-left: 14px; }
```
